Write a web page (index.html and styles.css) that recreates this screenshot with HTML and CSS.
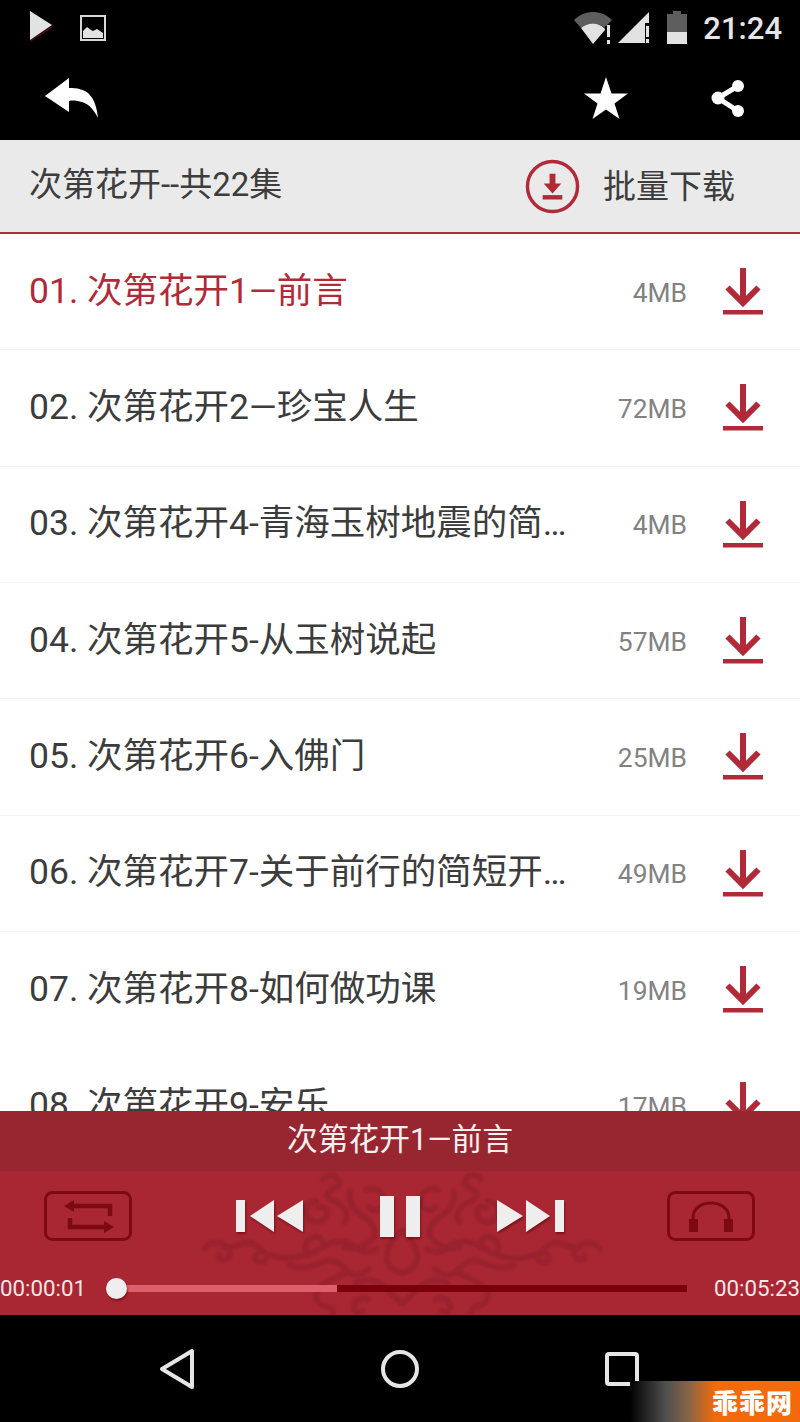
FILE: index.html
```html
<!DOCTYPE html>
<html lang="zh">
<head>
<meta charset="utf-8">
<title>次第花开</title>
<link rel="stylesheet" href="styles.css">
</head>
<body>
<div class="screen">
  <div class="status">
    <div class="status-left">
      <svg class="ic-play" viewBox="0 0 24 32"><path class="sh" d="M1 30 23 16 23 18 1 32z"/><path class="lt" d="M1 1 23 15 1 30z"/></svg>
      <svg class="ic-pic" viewBox="0 0 26 26"><rect x="1" y="1" width="24" height="24" fill="none" stroke="#d8d8d8" stroke-width="2"/><path class="lt" d="M3 23v-7l4-4 4 3 2 1 4-2 3 2 3 2v5z"/></svg>
    </div>
    <div class="status-right">
      <svg class="ic-wifi" viewBox="0 0 40 32"><path class="dk" d="M0 8C6 2 13 0 19 0s13 2 19 8l-6 6H31v2C24 10 14 10 7 16z"/><path class="lt" d="M7 16c7-6 17-6 23 0l1 1v1L19 32z"/><path class="lt" d="M33 13h3v12h-3zM33 28h3v4h-3z"/></svg>
      <svg class="ic-signal" viewBox="0 0 32 32"><path class="lt" d="M0 31 31 0v11h-4v20z"/><path class="lt" d="M28 14h3v11h-3zM28 27h3v4h-3z"/></svg>
      <svg class="ic-batt" viewBox="0 0 22 33"><path class="dk" d="M7 0h8v3h6v18H1V3h6z"/><rect class="lt" x="1" y="21" width="20" height="12"/></svg>
      <span class="clock">21:24</span>
    </div>
  </div>

  <div class="actionbar">
    <svg class="ic-back" viewBox="0 0 56 42"><path d="M1 18 25 0v10c8 0 15 1 20 6 6 6 8 15 9 24-4-8-9-14-16-16-4-1-9-2-13-1v11z"/></svg>
    <div class="actions">
      <svg class="ic-star" viewBox="0 0 44 42"><path d="M22 0l5.500 16.500 16.500 0-13.500 10 5 15.500-13.500-9.500-13.500 9.500 5-15.500-13.500-10 16.500 0z"/></svg>
      <svg class="ic-share" viewBox="0 0 34 38"><path class="line" d="M27 6 7 18 27 31"/><circle cx="27" cy="6" r="6"/><circle cx="7" cy="18" r="6.500"/><circle cx="27" cy="31" r="6"/></svg>
    </div>
  </div>

  <header class="head">
    <h1 class="head-title">次第花开--共22集</h1>
    <div class="bulk">
      <svg class="ic-bulk" viewBox="0 0 56 56"><circle cx="28" cy="28" r="25.500" fill="none" stroke="#b02a38" stroke-width="3.500"/><path d="M25 15h6v10h6l-9 10-9-10h6z" fill="#b02a38"/><path d="M18 39h20" stroke="#b02a38" stroke-width="4.500"/></svg>
      <span class="bulk-text">批量下载</span>
    </div>
  </header>

  <svg class="defs" width="0" height="0"><defs><g id="dl"><path d="M20 0v35M4.500 19.500 20 35 35.500 19.500" fill="none" stroke="#b02a38" stroke-width="6"/><rect y="42" width="40" height="4.500" fill="#b02a38"/></g></defs></svg>

  <ul class="list">
    <li class="row active"><span class="name">01. 次第花开1—前言</span><span class="size">4MB</span><svg class="dl" viewBox="0 0 40 47"><use href="#dl"/></svg></li>
    <li class="row"><span class="name">02. 次第花开2—珍宝人生</span><span class="size">72MB</span><svg class="dl" viewBox="0 0 40 47"><use href="#dl"/></svg></li>
    <li class="row"><span class="name">03. 次第花开4-青海玉树地震的简…</span><span class="size">4MB</span><svg class="dl" viewBox="0 0 40 47"><use href="#dl"/></svg></li>
    <li class="row"><span class="name">04. 次第花开5-从玉树说起</span><span class="size">57MB</span><svg class="dl" viewBox="0 0 40 47"><use href="#dl"/></svg></li>
    <li class="row"><span class="name">05. 次第花开6-入佛门</span><span class="size">25MB</span><svg class="dl" viewBox="0 0 40 47"><use href="#dl"/></svg></li>
    <li class="row"><span class="name">06. 次第花开7-关于前行的简短开…</span><span class="size">49MB</span><svg class="dl" viewBox="0 0 40 47"><use href="#dl"/></svg></li>
    <li class="row plain"><span class="name">07. 次第花开8-如何做功课</span><span class="size">19MB</span><svg class="dl" viewBox="0 0 40 47"><use href="#dl"/></svg></li>
    <li class="row plain"><span class="name">08. 次第花开9-安乐</span><span class="size">17MB</span><svg class="dl" viewBox="0 0 40 47"><use href="#dl"/></svg></li>
  </ul>

  <section class="player">
    <div class="now">次第花开1—前言</div>
    <div class="deck">
      <svg class="ornament" viewBox="0 0 410 144">
        <defs><g id="orn" fill="none" stroke="#741722" stroke-width="6" stroke-linecap="round">
          <path d="M125 9c3-6 13-7 16 1 3 7-12 8-12 14 0 6 14 6 18 15 2 5 2 9 0 12"/>
          <path d="M168 19c10-4 18 3 17 12-1 8-10 11-14 5"/>
          <path d="M118 30c-9 1-13 10-8 17 6 7 17 4 19-3 2-6-4-10-9-7"/>
          <path d="M152 20c-2 10 4 20 14 26 8 5 12 12 10 20"/>
          <path d="M6 78c5-7 13-8 20-4 7 5 8 11 2 14-5 2-8-1-7-4"/>
          <path d="M26 76c8 2 14-2 20-4 8-2 15 4 20 10 5 6 0 11-6 9-4-2-4-6-1-8"/>
          <path d="M66 82c14 6 30 6 43 2 10-3 18-11 27-13 9-2 17 1 23 6 7 5 14 5 20 1"/>
          <path d="M92 94c10 5 22 2 33-3 9-4 18 1 24 9 6 6 14 5 22-2"/>
          <path d="M110 84c-4-8-3-14 4-17 8-3 13 3 11 9"/>
          <path d="M176 66c-8 10-20 14-30 10"/>
          <path d="M150 100c-8 6-20 8-29 18-6 7-3 14 6 17 7 2 10 5 7 9"/>
          <path d="M158 112c8-4 18-4 26 2 7 5 12 14 21 18"/>
          <path d="M170 128c-7-2-13 1-14 7-1 5 4 8 8 5"/>
          <path d="M205 60c-8 5-14 12-16 22-2 10 4 18 16 20"/>
        </g></defs>
        <use href="#orn"/>
        <use href="#orn" transform="matrix(-1 0 0 1 408 0)"/>
      </svg>
      <div class="controls">
        <button class="box" type="button"><svg viewBox="0 0 88 50"><rect x="1.500" y="1.500" width="85" height="47" rx="7" fill="none" stroke="#7d0a13" stroke-width="3"/><g fill="none" stroke="#7d0a13" stroke-width="4.500"><path d="M26 15h40v10M26 27v9h39"/></g><path d="M20 15l10-6v12zM70 36l-10-6v12z" fill="#7d0a13"/></svg></button>
        <div class="transport">
          <svg class="tr-skip" viewBox="0 0 67 34"><path d="M0 1h9v32H0zM38 1v32L14 17zM67 1v32L41 17z"/></svg>
          <svg class="tr-pause" viewBox="0 0 40 41"><path d="M0 0h14v41H0zM26 0h14v41H26z"/></svg>
          <svg class="tr-skip" viewBox="0 0 67 34"><path d="M67 1h-9v32h9zM29 1v32l24-16zM0 1v32l26-16z"/></svg>
        </div>
        <button class="box" type="button"><svg viewBox="0 0 88 50"><rect x="1.500" y="1.500" width="85" height="47" rx="7" fill="none" stroke="#7d0a13" stroke-width="3"/><path d="M26 28v-1c0-20 36-20 36 0v1" fill="none" stroke="#7d0a13" stroke-width="3"/><rect x="22" y="28" width="9" height="13" fill="#7d0a13"/><rect x="57" y="28" width="9" height="13" fill="#7d0a13"/></svg></button>
      </div>
      <div class="progress">
        <span class="time">00:00:01</span>
        <div class="track">
          <div class="played" style="width:38.6%"></div>
          <div class="thumb"></div>
        </div>
        <span class="time">00:05:23</span>
      </div>
    </div>
  </section>

  <nav class="navbar">
    <svg class="nav-back" viewBox="0 0 36 42"><path d="M33 3v36L3 21z" fill="none" stroke="#e6e6e6" stroke-width="4" stroke-linejoin="round"/></svg>
    <svg class="nav-home" viewBox="0 0 38 38"><circle cx="19" cy="19" r="17" fill="none" stroke="#e6e6e6" stroke-width="4"/></svg>
    <svg class="nav-recent" viewBox="0 0 34 34"><rect x="2" y="2" width="30" height="30" rx="2" fill="none" stroke="#e6e6e6" stroke-width="4"/></svg>
  </nav>

  <div class="mark"><span class="mark-text">乖乖网</span></div>
</div>
</body>
</html>
```

FILE: styles.css
```css
* { box-sizing: border-box; }
html, body { margin: 0; padding: 0; background: #000; }
body { font-family: Roboto, "Noto Sans CJK SC", sans-serif; }
.defs { position: absolute; }

.screen {
  position: relative;
  width: 800px;
  height: 1422px;
  display: flex;
  flex-direction: column;
  overflow: hidden;
  background: #fff;
}

.status {
  height: 58px;
  flex: none;
  background: #000;
  display: flex;
  justify-content: space-between;
  align-items: flex-start;
  padding: 10px 18px 0 29px;
}
.status-left { display: flex; align-items: flex-start; gap: 27px; }
.status-right { display: flex; align-items: flex-start; }
.lt { fill: #e2e2e2; }
.dk { fill: #5e5e5e; }
.sh { fill: #4a0d12; }
.ic-play { width: 24px; height: 32px; }
.ic-pic { width: 26px; height: 26px; margin-top: 5px; }
.ic-wifi { width: 40px; height: 32px; margin-top: 2px; }
.ic-signal { width: 32px; height: 32px; margin: 2px 0 0 4px; }
.ic-batt { width: 22px; height: 33px; margin: 1px 0 0 16px; }
.clock { font-size: 31px; line-height: 38px; font-weight: 500; color: #e6e6e6; margin-left: 15px; }

.actionbar {
  height: 82px;
  flex: none;
  background: #000;
  display: flex;
  justify-content: space-between;
  align-items: flex-start;
  padding: 20px 55px 0 44px;
}
.actionbar svg { fill: #fff; }
.ic-back { width: 56px; height: 42px; }
.actions { display: flex; align-items: flex-start; gap: 83px; }
.ic-star { width: 44px; height: 42px; margin-top: -1px; }
.ic-share { width: 34px; height: 38px; margin-top: 2px; }
.line { fill: none; stroke: #fff; stroke-width: 5; }

.head {
  height: 94px;
  flex: none;
  background: #eaeaea;
  border-bottom: 2px solid #b02f3e;
  display: flex;
  justify-content: space-between;
  align-items: center;
  padding: 0 65px 0 29px;
}
.head-title { margin: 0 0 2px; font-size: 33px; font-weight: 400; color: #3d3d3d; line-height: 44px; }
.bulk { display: flex; align-items: center; gap: 23px; }
.ic-bulk { width: 55px; height: 55px; }
.bulk-text { font-size: 33px; color: #3d3d3d; line-height: 44px; margin-top: 2px; }

.list { list-style: none; margin: 0; padding: 0; flex: 1; min-height: 0; overflow: hidden; background: #fff; }
.row {
  height: 116.330px;
  display: flex;
  align-items: center;
  padding: 0 37px 0 29px;
  border-bottom: 1px solid #f3f3f3;
}
.row.plain { border-bottom-color: transparent; }
.name {
  flex: 1;
  min-width: 0;
  font-size: 35.500px;
  line-height: 46px;
  margin-bottom: 2px;
  color: #3c3c3c;
  white-space: nowrap;
}
.active .name { color: #b02a38; }
.size { width: 118px; flex: none; text-align: right; font-size: 26.400px; line-height: 32px; margin-top: 2px; color: #828282; }
.dl { width: 40px; height: 47px; flex: none; margin-left: 36px; }

.player { flex: none; height: 204px; display: flex; flex-direction: column; }
.now {
  height: 60px;
  flex: none;
  background: #982630;
  color: #f4f0f0;
  font-size: 30.800px;
  line-height: 58px;
  text-align: center;
}
.deck {
  position: relative;
  flex: 1;
  background: #a92733;
  overflow: hidden;
  display: flex;
  flex-direction: column;
  padding-top: 20px;
}
.ornament { position: absolute; left: 198px; top: 0; width: 410px; height: 144px; opacity: .3; filter: blur(.8px); }
.controls {
  position: relative;
  display: flex;
  justify-content: space-between;
  align-items: center;
  height: 50px;
  padding: 0 45px 0 44px;
}
.box { width: 88px; height: 50px; padding: 0; border: 0; background: none; }
.box svg { display: block; width: 88px; height: 50px; }
.transport { display: flex; align-items: center; gap: 77px; filter: drop-shadow(1px 2px 1px rgba(90, 0, 10, .55)); }
.tr-skip { width: 67px; height: 34px; fill: #eeeeee; }
.tr-pause { width: 40px; height: 41px; fill: #eeeeee; }

.progress { position: relative; display: flex; align-items: center; margin-top: 24px; height: 46px; }
.time { flex: none; width: 86px; font-size: 22.300px; color: #f3e6e6; white-space: nowrap; }
.track { position: relative; flex: none; width: 570px; height: 7px; margin: 0 27px 0 31px; background: #7a0009; }
.played { height: 100%; background: #dc5f6b; }
.thumb {
  position: absolute;
  left: -11px;
  top: -7px;
  width: 21px;
  height: 21px;
  border-radius: 50%;
  background: #eeeeee;
  box-shadow: 1px 2px 2px rgba(90, 0, 10, .5);
}

.navbar {
  height: 107px;
  flex: none;
  background: #000;
  display: flex;
  align-items: flex-start;
  padding: 32px 0 0 159px;
}
.nav-back { width: 36px; height: 42px; margin-top: 1px; }
.nav-home { width: 38px; height: 38px; margin: 3px 0 0 186px; }
.nav-recent { width: 34px; height: 34px; margin: 5px 0 0 186px; }

.mark {
  position: absolute;
  right: 0;
  bottom: 0;
  width: 170px;
  height: 41px;
  background: linear-gradient(to right, #000 0, #4f4f4f 21%, #8a6545 35%, #f26a0b 50%, #f26a0b 100%);
  display: flex;
  align-items: center;
  justify-content: flex-end;
  padding-right: 7px;
}
.mark-text { font-size: 26px; font-weight: 900; color: #fff; line-height: 30px; letter-spacing: 1px; font-family: "Noto Sans CJK SC", sans-serif; }
```
